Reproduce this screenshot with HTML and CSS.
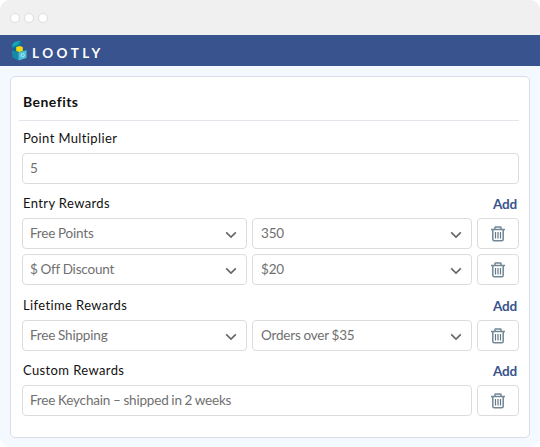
FILE: index.html
```html
<!DOCTYPE html>
<html lang="en">
<head>
<meta charset="utf-8">
<title>Lootly</title>
<link rel="stylesheet" href="styles.css">
</head>
<body>
<svg class="defs" aria-hidden="true">
  <symbol id="trash" viewBox="0 0 14 16">
    <path d="M0 3.5H14M4 3V1.6Q4 1 4.6 1H9.4Q10 1 10 1.6V3M1.8 4V13.3Q1.8 14.8 3.3 14.8H10.7Q12.2 14.8 12.2 13.3V4" fill="none" stroke="#718795" stroke-width="1.5"/>
    <path d="M4.5 6V12.5M7 6V12.5M9.5 6V12.5" fill="none" stroke="#637984" stroke-width="1.2"/>
  </symbol>
  <symbol id="chevron" viewBox="0 0 12 8">
    <path d="M1.2 1.4L6 6.1L10.8 1.4" fill="none" stroke="#666" stroke-width="1.6"/>
  </symbol>
</svg>
<div class="window">
  <div class="chrome"><i class="dot"></i><i class="dot"></i><i class="dot"></i></div>
  <header class="topbar">
    <svg class="logo" viewBox="0 0 17 22">
      <path d="M1 8L1.5 5L10.5 1.8L10.5 5L2.5 8.5Z" fill="#087e91"/>
      <path d="M.8 7.3C1 4 3 2 5 1.5L10 .5Q8 1.8 7.5 4.6L2 6.8Z" fill="#16a4b7"/>
      <path d="M.8 10L7.5 12.3V20.5L1.5 17.5Z" fill="#1689a8"/>
      <path d="M7.5 12.3L15.5 10V18L7.5 20.5Z" fill="#4bc2d8"/>
      <path d="M.8 10L7.5 7.5L15.5 10L7.5 12.3Z" fill="#0b7187"/>
      <path d="M5.2 7L8.5 6L11.8 7V11L8.5 12L5.2 11Z" fill="#f4d914"/>
      <circle cx="11.8" cy="15.2" r="1.6" fill="none" stroke="#b9e8ed" stroke-width=".9"/>
    </svg>
    <span class="brand">LOOTLY</span>
  </header>
  <main class="card">
    <h1 class="title">Benefits</h1>
    <section class="section">
      <div class="heading"><span>Point Multiplier</span></div>
      <div class="field">5</div>
    </section>
    <section class="section">
      <div class="heading"><span>Entry Rewards</span><a class="add">Add</a></div>
      <div class="row">
        <div class="field">Free Points<svg class="chevron"><use href="#chevron"/></svg></div>
        <div class="field">350<svg class="chevron"><use href="#chevron"/></svg></div>
        <div class="delete"><svg class="trash"><use href="#trash"/></svg></div>
      </div>
      <div class="row">
        <div class="field">$ Off Discount<svg class="chevron"><use href="#chevron"/></svg></div>
        <div class="field">$20<svg class="chevron"><use href="#chevron"/></svg></div>
        <div class="delete"><svg class="trash"><use href="#trash"/></svg></div>
      </div>
    </section>
    <section class="section lifetime">
      <div class="heading"><span>Lifetime Rewards</span><a class="add">Add</a></div>
      <div class="row">
        <div class="field">Free Shipping<svg class="chevron"><use href="#chevron"/></svg></div>
        <div class="field">Orders over $35<svg class="chevron"><use href="#chevron"/></svg></div>
        <div class="delete"><svg class="trash"><use href="#trash"/></svg></div>
      </div>
    </section>
    <section class="section">
      <div class="heading"><span>Custom Rewards</span><a class="add">Add</a></div>
      <div class="row">
        <div class="field wide">Free Keychain – shipped in 2 weeks</div>
        <div class="delete"><svg class="trash"><use href="#trash"/></svg></div>
      </div>
    </section>
  </main>
</div>
</body>
</html>
```
FILE: styles.css
```css
* { box-sizing: border-box; }
body { margin: 0; background: #fff; font-family: Carlito, Lato, sans-serif; }
.defs { display: none; }
.window { height: 447px; background: #f4f8ff; border-radius: 10px; overflow: hidden; }
.chrome { height: 35px; background: #f0f0f0; display: flex; gap: 4px; padding: 13px 10px; }
.dot { width: 10px; height: 10px; border: 1px solid #dedede; border-radius: 50%; background: #fff; }
.topbar { height: 31px; background: #38538d; display: flex; align-items: center; padding-left: 11px; }
.logo { width: 17px; height: 22px; }
.brand { color: #fff; font-family: Lato, sans-serif; font-size: 13.5px; line-height: 16px; font-weight: 700; letter-spacing: 3.5px; margin: 4px 0 0 4px; }
.card { margin: 10px 10px 0; height: 362px; border: 1px solid #d7deea; border-radius: 5px; background: #fff; padding: 0 10px 0 11px; }
.title { margin: 0 0 0 -3px; height: 44px; padding: 8px 0 0 4px; border-bottom: 1px solid #e3e5ec; font-family: Lato, sans-serif; font-size: 14px; line-height: 34px; font-weight: 700; letter-spacing: .45px; color: #111; }
.heading { height: 34px; display: flex; justify-content: space-between; padding: 0 2px 0 1px; font-family: Lato, sans-serif; font-size: 13px; line-height: 38px; letter-spacing: .38px; color: #111; }
.section:nth-of-type(1) .heading { height: 32px; line-height: 34px; }
.lifetime .heading { height: 35px; line-height: 40px; }
.add { color: #38538d; font-size: 13.5px; font-weight: 700; letter-spacing: -.2px; line-height: 40px; }
.lifetime .add { line-height: 42px; }
.field, .delete { height: 31px; border: 1px solid #dcdcdc; border-radius: 4px; background: #fff; display: flex; align-items: center; }
.field { justify-content: space-between; padding: 0 9px 2px 7px; font-family: Lato, sans-serif; font-size: 13.5px; letter-spacing: -.18px; word-spacing: -.5px; color: #707070; }
.row { display: grid; grid-template-columns: 225px 220px 42px; gap: 5px; }
.row + .row { margin-top: 5px; }
.row .field:nth-child(2) { padding-left: 8px; }
.wide { grid-column: span 2; }
.delete { justify-content: center; }
.chevron { width: 12px; height: 8px; margin-top: 4px; }
.trash { width: 14px; height: 16px; }
```
